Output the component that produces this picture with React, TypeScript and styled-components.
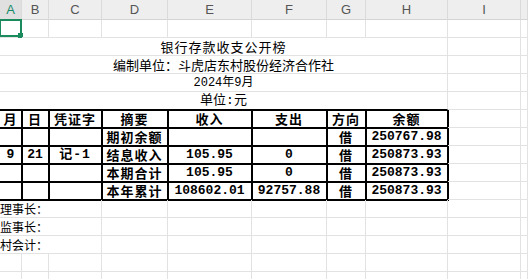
import React from "react";
import styled, { createGlobalStyle } from "styled-components";

const GlobalStyle = createGlobalStyle`
  body {
    margin: 0;
    background: #ffffff;
    font-family: "Noto Sans CJK SC", "Liberation Sans", sans-serif;
  }
`;

const columns = ["A", "B", "C", "D", "E", "F", "G", "H", "I", ""];

// 表格主体：月 日 凭证字 摘要 收入 支出 方向 余额
const tableHead = ["月", "日", "凭证字", "摘要", "收入", "支出", "方向", "余额"];
const tableRows = [
  ["", "", "", "期初余额", "", "", "借", "250767.98"],
  ["9", "21", "记-1", "结息收入", "105.95", "0", "借", "250873.93"],
  ["", "", "", "本期合计", "105.95", "0", "借", "250873.93"],
  ["", "", "", "本年累计", "108602.01", "92757.88", "借", "250873.93"],
];
const signers = ["理事长：", "监事长：", "村会计："];

const isNum = (s: string) => /^[0-9.\-]+$/.test(s);

const App = () => {
  return (
    <>
      <GlobalStyle />
      <Sheet>
        {columns.map((c, i) => (
          <ColHead key={"h" + i} $active={c === "A"}>
            {c}
          </ColHead>
        ))}

        {/* row 1 */}
        <Cell>
          <Selection>
            <Handle />
          </Selection>
        </Cell>
        {Array.from({ length: 9 }).map((_, i) => (
          <Cell key={"r1" + i} />
        ))}

        {/* title rows */}
        <Cell $span={8} $align="center" $size={13} $wide>
          银行存款收支公开榜
        </Cell>
        <Cell />
        <Cell />
        <Cell $span={8} $align="center" $size={13}>
          编制单位：斗虎店东村股份经济合作社
        </Cell>
        <Cell />
        <Cell />
        <Cell $span={8} $align="center" $size={12} $mono>
          2024年9月
        </Cell>
        <Cell />
        <Cell />
        <Cell $span={8} $align="center" $size={13} $mono $under>
          单位:元
        </Cell>
        <Cell />
        <Cell />

        {/* table */}
        {tableHead.map((t, i) => (
          <Cell key={"th" + i} $box $bold $wide $align="center" $size={13}>
            {t}
          </Cell>
        ))}
        <Cell />
        <Cell />
        {tableRows.map((row, r) => (
          <React.Fragment key={"tr" + r}>
            {row.map((t, i) => (
              <Cell
                key={i}
                $box
                $bold
                $align="center"
                $mono={isNum(t) || t.includes("-")}
                $wide={!isNum(t)}
                $size={13}
              >
                {t}
              </Cell>
            ))}
            <Cell />
            <Cell />
          </React.Fragment>
        ))}

        {/* signers */}
        {signers.map((s) => (
          <React.Fragment key={s}>
            <Cell $span={3} $size={12} $flush>
              {s}
            </Cell>
            {Array.from({ length: 7 }).map((_, i) => (
              <Cell key={i} />
            ))}
          </React.Fragment>
        ))}

        {Array.from({ length: 20 }).map((_, i) => (
          <Cell key={"e" + i} />
        ))}
      </Sheet>
    </>
  );
};

export default App;

const Sheet = styled.div`
  display: grid;
  grid-template-columns: 22px 27px 53px 66px 84px 75px 39px 82px 73px 1fr;
  grid-template-rows: 20px repeat(15, 18px);
  width: 528px;
  height: 279px;
  overflow: hidden;
  background: #ffffff;
`;

const ColHead = styled.div<{ $active?: boolean }>`
  box-sizing: border-box;
  display: flex;
  align-items: center;
  justify-content: center;
  background: ${(p) => (p.$active ? "#e0e0e0" : "#eeeeee")};
  border-right: 1px solid #dadada;
  border-bottom: 1px solid #d4d4d4;
  color: ${(p) => (p.$active ? "#17896a" : "#555555")};
  font-family: "Liberation Sans", Arial, sans-serif;
  font-size: 13px;
`;

const Cell = styled.div<{
  $span?: number;
  $align?: "left" | "center";
  $size?: number;
  $bold?: boolean;
  $mono?: boolean;
  $wide?: boolean;
  $box?: boolean;
  $under?: boolean;
  $flush?: boolean;
}>`
  position: relative;
  box-sizing: border-box;
  grid-column: span ${(p) => p.$span || 1};
  display: flex;
  align-items: center;
  justify-content: ${(p) => (p.$align === "center" ? "center" : "flex-start")};
  padding: ${(p) => (p.$box ? "0 1px" : p.$flush ? "1px 0 0" : "1px 2px 0")};
  white-space: nowrap;
  overflow: visible;
  color: #000000;
  font-size: ${(p) => p.$size || 13}px;
  font-weight: ${(p) => (p.$bold ? 700 : 400)};
  letter-spacing: ${(p) => (p.$wide ? "1px" : "0")};
  font-family: ${(p) =>
    p.$mono
      ? '"Liberation Mono", "Noto Sans CJK SC", monospace'
      : '"Noto Sans CJK SC", "Liberation Sans", sans-serif'};
  line-height: 16px;
  border-right: 1px solid ${(p) => (p.$box ? "#000000" : "#e2e2e2")};
  border-bottom: 1px solid
    ${(p) => (p.$box || p.$under ? "#000000" : "#e2e2e2")};
  box-shadow: ${(p) =>
    p.$box
      ? "1px 0 0 #000000, 0 1px 0 #000000, 1px 1px 0 #000000"
      : p.$under
      ? "0 1px 0 #000000"
      : "none"};
`;

const Selection = styled.div`
  position: absolute;
  top: -1px;
  left: -1px;
  width: 23px;
  height: 18px;
  box-sizing: border-box;
  border: 2px solid #1b8a5c;
  pointer-events: none;
`;

const Handle = styled.span`
  position: absolute;
  right: -3px;
  bottom: -3px;
  width: 5px;
  height: 5px;
  background: #1b8a5c;
`;
